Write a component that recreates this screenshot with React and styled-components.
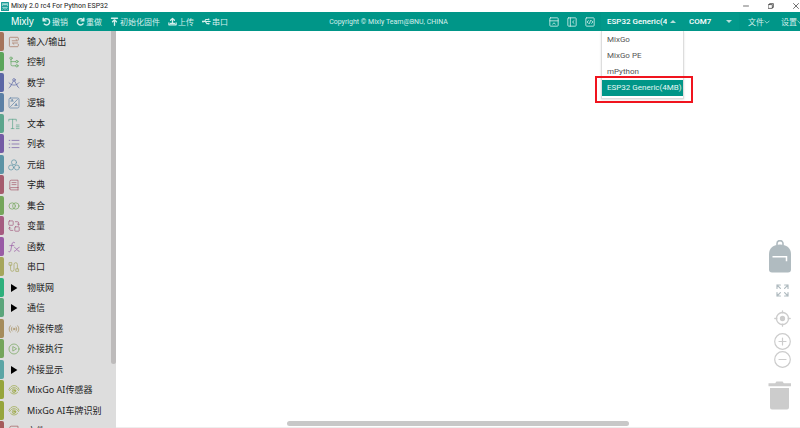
import React, { useState } from "react";
import styled, { createGlobalStyle } from "styled-components";

const colors = {
  teal: "#009688",
  tealText: "#d5efec",
  sidebar: "#dddddd",
  tool: "#cccccc",
  backpack: "#b0bbc0",
};

const uiFont = `"Noto Sans", "Noto Sans CJK SC", sans-serif`;
const formFont = `Roboto, "Noto Sans CJK SC", sans-serif`;

const GlobalStyle = createGlobalStyle`
  * {
    box-sizing: border-box;
  }

  body {
    margin: 0;
    overflow: hidden;
    background: #ffffff;
    font-family: ${uiFont};
  }
`;

const Page = styled.div`
  display: flex;
  flex-direction: column;
  height: 100vh;
`;

const TitleBar = styled.header`
  display: flex;
  align-items: center;
  flex: none;
  height: 12px;
  padding: 0 1px;
  gap: 2px;
  color: #222222;
`;

const Title = styled.h1`
  margin: 0;
  flex: 1;
  font-family: ${formFont};
  font-size: 7px;
  font-weight: 400;
  line-height: 12px;
`;

const WindowButtons = styled.div`
  display: flex;
  gap: 18px;
`;

const WindowButton = styled.button`
  display: flex;
  align-items: center;
  justify-content: center;
  width: 7px;
  height: 12px;
  padding: 0;
  border: none;
  background: none;
  color: #333333;
`;

const Toolbar = styled.nav`
  display: flex;
  align-items: center;
  flex: none;
  height: 19px;
  padding-left: 11px;
  background: ${colors.teal};
  color: ${colors.tealText};
  white-space: nowrap;
`;

const Brand = styled.a`
  width: 31px;
  color: #ffffff;
  font-family: "Liberation Sans", sans-serif;
  font-size: 10px;
  line-height: 18px;
  text-decoration: none;
`;

const Actions = styled.div`
  display: flex;
  gap: 8px;
`;

const ActionButton = styled.button`
  display: flex;
  align-items: center;
  gap: 1px;
  padding: 0;
  border: none;
  background: none;
  color: inherit;
  font-family: ${uiFont};
  font-size: 8px;
  line-height: 18px;
  cursor: pointer;
`;

const Copyright = styled.div`
  flex: 1;
  text-align: center;
  font-family: ${formFont};
  font-size: 7px;
  line-height: 18px;
`;

const ViewButtons = styled.div`
  display: flex;
  gap: 8px;
  padding-right: 6px;
`;

const Picker = styled.div`
  position: relative;
  display: flex;
  align-items: center;
  width: ${(props) => (props.$wide ? "82px" : "56px")};
`;

const PickerSelect = styled.select`
  appearance: none;
  width: 100%;
  height: 17px;
  padding: 0 16px 0 6px;
  border: none;
  border-radius: 1px;
  background: #02998b;
  color: #ffffff;
  font-family: ${formFont};
  font-size: 8px;
  font-weight: 500;
  outline: none;
`;

const PickerArrow = styled.span`
  position: absolute;
  right: 7px;
  border: 3px solid transparent;
  border-top-width: ${(props) => (props.$up ? "0" : "3px")};
  border-bottom-width: ${(props) => (props.$up ? "3px" : "0")};
  border-top-color: #b9dfdb;
  border-bottom-color: #b9dfdb;
  pointer-events: none;
`;

const Menu = styled.ul`
  position: absolute;
  top: 18px;
  left: 0;
  right: -1px;
  z-index: 2;
  margin: 0;
  padding: 1px 0 2px;
  border: 1px solid #dddddd;
  border-top: none;
  background: #ffffff;
  box-shadow: 0 1px 2px rgba(0, 0, 0, 0.12);
  list-style: none;
`;

const MenuItem = styled.li`
  position: relative;
`;

const MenuButton = styled.button`
  display: block;
  width: 100%;
  height: 16px;
  padding: 0 0 0 5px;
  border: none;
  background: ${(props) => (props.$selected ? colors.teal : "transparent")};
  color: ${(props) => (props.$selected ? "#e6f6f4" : "#555555")};
  font-family: ${formFont};
  font-size: 8px;
  line-height: 16px;
  text-align: left;
  white-space: nowrap;
  cursor: pointer;
`;

const Highlight = styled.span`
  position: absolute;
  inset: -4px -10px -7px -7px;
  border: 2px solid #f0141e;
  pointer-events: none;
`;

const NavLinks = styled.div`
  display: flex;
  gap: 11px;
  width: 61px;
  padding-left: 9px;
  overflow: hidden;
`;

const NavLink = styled.a`
  display: flex;
  flex: none;
  align-items: center;
  color: inherit;
  font-size: 8px;
  line-height: 18px;
  text-decoration: none;
`;

const Body = styled.div`
  display: flex;
  flex: 1;
  min-height: 0;
`;

const Sidebar = styled.aside`
  display: flex;
  width: 116px;
  flex: none;
  overflow: hidden;
  background: ${colors.sidebar};
`;

const CategoryList = styled.ul`
  flex: 1;
  margin: 0;
  padding: 1px 0 0;
  list-style: none;
`;

const Category = styled.li`
  &:nth-child(2n) {
    margin-bottom: 1px;
  }
`;

const CategoryButton = styled.button`
  display: flex;
  align-items: center;
  width: 100%;
  height: 20px;
  padding: 0;
  border: none;
  background: none;
  color: #222222;
  font-family: ${uiFont};
  font-size: 9px;
  line-height: 20px;
  white-space: nowrap;
  cursor: pointer;
`;

const Stripe = styled.span`
  align-self: flex-start;
  width: 4px;
  height: 19px;
  margin-right: 4px;
  border-radius: 0 2px 2px 0;
  background: ${(props) => props.$color};
`;

const IconBox = styled.span`
  display: flex;
  align-items: center;
  justify-content: center;
  width: 12px;
  margin-right: 7px;
`;

const SideScroll = styled.div`
  width: 5px;
  height: 84%;
  border-radius: 0 0 3px 3px;
  background: #bdbbbb;
`;

const Workspace = styled.main`
  position: relative;
  display: flex;
  flex: 1;
  flex-direction: column;
  justify-content: flex-end;
  border-bottom: 1px solid #eeeeee;
`;

const BottomScroll = styled.div`
  width: 50%;
  height: 5px;
  margin: 0 auto 1px 25%;
  border-radius: 3px;
  background: #c8c8c8;
`;

const CanvasTools = styled.div`
  position: absolute;
  right: 8px;
  bottom: 17px;
  display: flex;
  flex-direction: column;
  align-items: center;
  width: 24px;
`;

const ToolButton = styled.button`
  display: flex;
  margin: 0 0 ${(props) => props.$space || 0}px ${(props) => props.$indent || 0}px;
  padding: 0;
  border: none;
  background: none;
  cursor: pointer;
`;

function Glyph({ color = "currentColor", size = 12, box = 12, width = 0.7, children }) {
  return (
    <svg
      width={size}
      height={size}
      viewBox={`0 0 ${box} ${box}`}
      fill="none"
      stroke={color}
      strokeWidth={width}
      strokeLinecap="round"
      strokeLinejoin="round"
      aria-hidden="true"
    >
      {children}
    </svg>
  );
}

const icons = {
  io: (
    <path d="M10.3 4V2.2a.9.9 0 0 0-.9-.9H2.3a.9.9 0 0 0-.9.9v7.6c0 .5.4.9.9.9h7.1c.5 0 .9-.4.9-.9V8.4M4.2 4.8h5.3L8 3.5M9.8 7H4.4l1.5 1.3" />
  ),
  control: (
    <>
      <circle cx="3" cy="2.2" r="1.2" />
      <circle cx="8.9" cy="5.6" r="1.2" />
      <circle cx="8.9" cy="9.8" r="1.2" />
      <path d="M3 3.4v5.2c0 .8.4 1.2 1.2 1.2h3.5M3 5.6h4.7" />
    </>
  ),
  math: (
    <>
      <circle cx="6" cy="2.9" r="1.3" />
      <path d="M5.4 4L2.6 9.2M6.6 4l2.8 5.2M1 5.8c2.8 3.2 7.5 3.2 10-.2M2.6 9.2L1 10.8M9.4 9.2L11 10.8" />
    </>
  ),
  logic: (
    <>
      <rect x="1" y="1" width="10" height="10" rx="1.4" />
      <path d="M9.5 2.4L2.5 9.6M2.8 4.1h2.5M6.8 8.5h2.4" />
      <circle cx="4" cy="3" r="0.4" />
      <circle cx="8" cy="7.2" r="0.4" />
    </>
  ),
  text: (
    <path d="M.8 3V1.3h7.5V3M4.6 1.3v9.3M3.2 10.6H6M8.3 7h2.8M8.3 8.8h2.8M8.3 10.6h2.8" />
  ),
  list: <path d="M1.2 2.4h.6M1.2 6h.6M1.2 9.6h.6M4 2.4h7M4 6h7M4 9.6h7" />,
  tuple: (
    <>
      <circle cx="6" cy="3.3" r="2.5" />
      <circle cx="3.1" cy="8.5" r="2.5" />
      <circle cx="8.9" cy="8.5" r="2.5" />
    </>
  ),
  dict: (
    <path d="M10 8.5V1.2H3.2C2.3 1.2 1.8 1.7 1.8 2.5v7.2c0 .7.5 1.2 1.2 1.2h7M10 8.6H3c-.7 0-1.2.4-1.2 1.1M10 8.6v2.3M4 3.6h4M4 5.6h4" />
  ),
  set: (
    <>
      <circle cx="4.2" cy="6" r="3.2" />
      <circle cx="7.8" cy="6" r="3.2" />
    </>
  ),
  variable: (
    <>
      <rect x="0.8" y="0.9" width="4.4" height="4.4" rx="0.6" />
      <rect x="6.8" y="6.8" width="4.4" height="4.4" rx="0.6" />
      <path d="M7.4 1.7h2c.8 0 1.2.4 1.2 1.2V5M9.4 4l1.2 1 1-1M4.8 10.4h-2c-.8 0-1.2-.4-1.2-1.2V7.2M.8 8.2l.8-1 1 1" />
    </>
  ),
  func: (
    <path d="M6.6 1.6C5.4.7 4.4 1.4 4.1 2.8L2.8 9.2c-.3 1.4-1 1.9-2 1.5M1.8 4.6h4M6.6 6.2c1.4 0 2.6 4.4 4.6 4.2M11.2 6.2c-1.6 0-3 4.2-4.8 4.2" />
  ),
  serial: (
    <path d="M1.4 1.6h2.4v2.6H1.4zM2.6 4.2v4.4a1.7 1.7 0 0 0 3.4 0V3.4a1.7 1.7 0 0 1 3.4 0v4.4M8.2 7.8h2.4v2.6H8.2z" />
  ),
  arrow: <path d="M3 2v8L9.4 6z" fill="#000" stroke="none" />,
  sensor: (
    <>
      <circle cx="6" cy="6" r="0.9" />
      <path d="M4 4c-1 1.2-1 2.8 0 4M8 4c1 1.2 1 2.8 0 4M2.3 2.8c-1.6 1.9-1.6 4.5 0 6.4M9.7 2.8c1.6 1.9 1.6 4.5 0 6.4" />
    </>
  ),
  play: (
    <>
      <circle cx="6" cy="6" r="5" />
      <path d="M4.8 3.9v4.2L8.2 6z" />
    </>
  ),
  eye: (
    <>
      <path d="M.9 5.4C2.2 2.6 4 1.6 6.1 1.6s4 1.2 5 3.8M1.6 6.6C2.8 4.6 4.2 3.7 6 3.7s3.5 1 4.6 2.9M2.6 8.4c2 2.2 5 2.2 7-.1" />
      <circle cx="6" cy="6.8" r="1.8" />
      <circle cx="6" cy="6.8" r="0.6" />
    </>
  ),
};

const categories = [
  { name: "输入/输出", icon: "io", color: "#a5745b" },
  { name: "控制", icon: "control", color: "#5ba55b" },
  { name: "数学", icon: "math", color: "#5b67a5" },
  { name: "逻辑", icon: "logic", color: "#5b80a5" },
  { name: "文本", icon: "text", color: "#5ba58c" },
  { name: "列表", icon: "list", color: "#745ba5" },
  { name: "元组", icon: "tuple", color: "#5b93a5" },
  { name: "字典", icon: "dict", color: "#a55b6d" },
  { name: "集合", icon: "set", color: "#74a55b" },
  { name: "变量", icon: "variable", color: "#a55b80" },
  { name: "函数", icon: "func", color: "#995ba5" },
  { name: "串口", icon: "serial", color: "#a5a55b" },
  { name: "物联网", icon: "arrow", color: "#2eb07c" },
  { name: "通信", icon: "arrow", color: "#5ba57b" },
  { name: "外接传感", icon: "sensor", color: "#a58c5b" },
  { name: "外接执行", icon: "play", color: "#74a55b" },
  { name: "外接显示", icon: "arrow", color: "#5ba5a5" },
  { name: "MixGo AI传感器", icon: "eye", color: "#96a53c" },
  { name: "MixGo AI车牌识别", icon: "eye", color: "#96a53c" },
  { name: "文件", icon: "dict", color: "#a55b5b" },
];

const boards = ["MixGo", "MixGo PE", "mPython", "ESP32 Generic(4MB)"];

const actions = [
  {
    name: "撤销",
    icon: <path d="M1.6 1.6v3.6h3.6M2.2 4.6A4.2 4.2 0 1 1 3 9.4" />,
    width: 1.9,
  },
  {
    name: "重做",
    icon: <path d="M10.4 1.6v3.6H6.8M9.8 4.6A4.2 4.2 0 1 0 9.4 9" />,
    width: 1.9,
  },
  {
    name: "初始化固件",
    icon: <path d="M2 1.6h8M6 11V4.2M3.4 6.4L6 3.8l2.6 2.6" />,
    width: 1.8,
  },
  {
    name: "上传",
    icon: <path d="M6 7.6V2M3.4 4.4L6 1.8l2.6 2.6M1.2 7.8v2.6h9.6V7.8M3.4 8.6h5.2" />,
    width: 1.7,
  },
  {
    name: "串口",
    icon: (
      <>
        <path d="M1 6h10M3.2 6l2-2.8h3M4.4 6l2 2.8h2" />
        <circle cx="1.4" cy="6" r="0.7" />
        <circle cx="8.8" cy="3.2" r="0.5" />
        <circle cx="9" cy="8.8" r="0.5" />
      </>
    ),
    width: 1.4,
  },
];

const views = [
  { name: "toolbox", icon: <path d="M1 4.6h10M4.4 8.4L6 7l1.6 1.4" /> },
  { name: "panel", icon: <path d="M4 1v10M8.4 4.4L6.6 6l1.8 1.6" /> },
  { name: "code", icon: <path d="M4 4.4L2.6 6 4 7.6M8 4.4L9.4 6 8 7.6M6.6 4.2L5.4 7.8" /> },
];

function Logo() {
  return (
    <svg width="8" height="9" viewBox="0 0 8 9" aria-hidden="true">
      <rect width="8" height="9" rx="0.6" fill="#1a9c96" />
      <path
        d="M1.4 4V1.6h1.2V3h.9V1.6h1V3h.9V1.6h1.2V4M1.3 5.4h5.4M1.5 7.4l1.2-1M4 6v1.8M6.5 7.4l-1.2-1"
        fill="none"
        stroke="#d4f1ee"
        strokeWidth="0.7"
      />
    </svg>
  );
}

function BoardPicker() {
  const [open, setOpen] = useState(true);
  const [board, setBoard] = useState("ESP32 Generic(4MB)");

  function choose(name) {
    setBoard(name);
    setOpen(false);
  }

  return (
    <Picker $wide>
      <PickerSelect
        aria-label="board"
        value={board}
        onChange={(e) => choose(e.target.value)}
      >
        {boards.map((name) => (
          <option key={name}>{name}</option>
        ))}
      </PickerSelect>
      <PickerArrow $up={open} />
      {open && (
        <Menu>
          {boards.map((name) => (
            <MenuItem key={name}>
              <MenuButton $selected={name === board} onClick={() => choose(name)}>
                {name}
              </MenuButton>
              {name === board && <Highlight />}
            </MenuItem>
          ))}
        </Menu>
      )}
    </Picker>
  );
}

function Tools() {
  return (
    <CanvasTools>
      <ToolButton aria-label="backpack" $space={11}>
        <svg width="22" height="33" viewBox="0 0 22 33">
          <path
            d="M8 5V3.6a3 3 0 0 1 6 0V5"
            fill="none"
            stroke={colors.backpack}
            strokeWidth="1.6"
          />
          <path
            d="M0 14C0 8 4.5 4.4 11 4.4S22 8 22 14v15.5a3 3 0 0 1-3 3H3a3 3 0 0 1-3-3z"
            fill={colors.backpack}
          />
          <path d="M3.5 16.8h14v4.4" fill="none" stroke="#fff" strokeWidth="1.5" />
        </svg>
      </ToolButton>
      <ToolButton aria-label="full screen" $space={13} $indent={5}>
        <Glyph color={colors.backpack} size={13} box={13} width={1.2}>
          <path d="M1 4.4V1h3.4M1 1l3.4 3.4M8.6 1H12v3.4M12 1L8.6 4.4M1 8.6V12h3.4M1 12l3.4-3.4M12 8.6V12H8.6M12 12L8.6 8.6" />
        </Glyph>
      </ToolButton>
      <ToolButton aria-label="center" $space={6} $indent={5}>
        <Glyph color={colors.tool} size={17} box={17} width={1.3}>
          <circle cx="8.5" cy="8.5" r="6" />
          <circle cx="8.5" cy="8.5" r="2" fill={colors.tool} />
          <path d="M8.5 .8v2M8.5 14.2v2M.8 8.5h2M14.2 8.5h2" />
        </Glyph>
      </ToolButton>
      <ToolButton aria-label="zoom in" $space={1} $indent={5}>
        <Glyph color={colors.tool} size={17} box={17} width={1.2}>
          <circle cx="8.5" cy="8.5" r="7.8" />
          <path d="M5 8.5h7M8.5 5v7" />
        </Glyph>
      </ToolButton>
      <ToolButton aria-label="zoom out" $space={13} $indent={5}>
        <Glyph color={colors.tool} size={17} box={17} width={1.2}>
          <circle cx="8.5" cy="8.5" r="7.8" />
          <path d="M5 8.5h7" />
        </Glyph>
      </ToolButton>
      <ToolButton aria-label="trash">
        <svg width="24" height="29" viewBox="0 0 24 29" fill={colors.tool}>
          <path d="M.5 2.2h6.7L8.4.5h6.2l1.2 1.7h7.2v3H.5zM2 7h19v19.6a2 2 0 0 1-2 2H4a2 2 0 0 1-2-2z" />
        </svg>
      </ToolButton>
    </CanvasTools>
  );
}

export default function App() {
  return (
    <Page>
      <GlobalStyle />
      <TitleBar>
        <Logo />
        <Title>Mixly 2.0 rc4 For Python ESP32</Title>
        <WindowButtons>
          <WindowButton aria-label="minimize">
            <Glyph size={6} box={6}>
              <path d="M.5 3h5" />
            </Glyph>
          </WindowButton>
          <WindowButton aria-label="restore">
            <Glyph size={6} box={6}>
              <path d="M.5 1.6h3.8v3.8H.5zM1.6 1.6V.6h3.8v3.8H4.4" />
            </Glyph>
          </WindowButton>
          <WindowButton aria-label="close">
            <Glyph size={6} box={6}>
              <path d="M.5.5l5 5M5.5.5l-5 5" />
            </Glyph>
          </WindowButton>
        </WindowButtons>
      </TitleBar>
      <Toolbar>
        <Brand href="#">Mixly</Brand>
        <Actions>
          {actions.map((item) => (
            <ActionButton key={item.name}>
              <Glyph size={9} width={item.width}>
                {item.icon}
              </Glyph>
              {item.name}
            </ActionButton>
          ))}
        </Actions>
        <Copyright>Copyright © Mixly Team@BNU, CHINA</Copyright>
        <ViewButtons>
          {views.map((view) => (
            <ActionButton key={view.name} aria-label={view.name}>
              <Glyph size={10} width={1}>
                <rect x="1" y="1" width="10" height="10" rx="1" />
                {view.icon}
              </Glyph>
            </ActionButton>
          ))}
        </ViewButtons>
        <BoardPicker />
        <Picker>
          <PickerSelect aria-label="port">
            <option>COM7</option>
          </PickerSelect>
          <PickerArrow />
        </Picker>
        <NavLinks>
          {["文件", "设置"].map((name) => (
            <NavLink key={name} href="#">
              {name}
              <Glyph size={6} box={6}>
                <path d="M.8 2L3 4.2 5.2 2" />
              </Glyph>
            </NavLink>
          ))}
        </NavLinks>
      </Toolbar>
      <Body>
        <Sidebar>
          <CategoryList>
            {categories.map((item) => (
              <Category key={item.name}>
                <CategoryButton>
                  <Stripe $color={item.color} />
                  <IconBox>
                    <Glyph color={item.color}>{icons[item.icon]}</Glyph>
                  </IconBox>
                  {item.name}
                </CategoryButton>
              </Category>
            ))}
          </CategoryList>
          <SideScroll />
        </Sidebar>
        <Workspace>
          <Tools />
          <BottomScroll />
        </Workspace>
      </Body>
    </Page>
  );
}
